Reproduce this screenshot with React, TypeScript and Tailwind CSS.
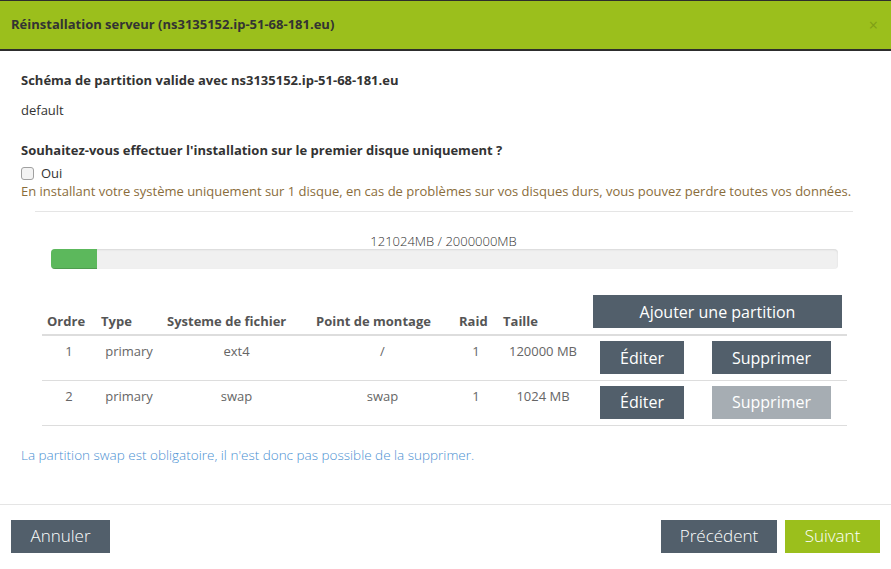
const rows = [
  { ordre: 1, type: "primary", fs: "ext4", mount: "/", raid: 1, size: "120000 MB", canDelete: true },
  { ordre: 2, type: "primary", fs: "swap", mount: "swap", raid: 1, size: "1024 MB", canDelete: false },
];

export default function App() {
  return (
    <div className="w-[891px] h-[569px] bg-white font-['Open_Sans',sans-serif] text-[13px] text-[#333] overflow-hidden">
      {/* header */}
      <div className="h-[51px] border-t border-[#2d2d2d] border-b-2 border-b-[#2d2d2d] bg-[#9bbf1c] flex items-center justify-between pl-[11px] pr-[13px]">
        <h3 className="font-bold text-[13px] text-[#333]">
          Réinstallation serveur (ns3135152.ip-51-68-181.eu)
        </h3>
        <span className="text-[16px] text-[#7f9e16] leading-none">×</span>
      </div>

      {/* body */}
      <div className="px-[21px] pt-[19px]">
        <h4 className="font-bold leading-[20px]">Schéma de partition valide avec ns3135152.ip-51-68-181.eu</h4>
        <p className="mt-[10px] leading-[20px]">default</p>
        <h4 className="mt-[20px] font-bold leading-[20px]">
          Souhaitez-vous effectuer l'installation sur le premier disque uniquement ?
        </h4>
        <label className="mt-[4px] flex items-center gap-[7px] leading-[18px]">
          <span className="w-[13px] h-[13px] rounded-[3px] border border-[#a0a0a0] bg-[#f3f3f3]"></span>
          Oui
        </label>
        <p className="leading-[18px] text-[#8a6d3b]">
          En installant votre système uniquement sur 1 disque, en cas de problèmes sur vos disques durs, vous pouvez perdre toutes vos données.
        </p>
        <div className="mt-[11px] ml-[14px] mr-[17px] border-t border-[#e5e5e5]"></div>

        <p className="mt-[20px] text-center leading-[18px] text-[#333] font-light pr-[4px]">121024MB / 2000000MB</p>
        <div className="mt-[-1px] ml-[30px] w-[787px] h-[20px] rounded-[4px] bg-[#f0f0f0] shadow-[inset_0_1px_2px_rgba(0,0,0,0.1)] overflow-hidden">
          <div className="h-full w-[46px] bg-[#5cb85c] shadow-[inset_0_-1px_0_rgba(0,0,0,0.15)]"></div>
        </div>

        <table className="mt-[26px] ml-[21px] w-[805px] border-collapse table-fixed">
          <colgroup>
            <col className="w-[54px]" />
            <col className="w-[66px]" />
            <col className="w-[149px]" />
            <col className="w-[143px]" />
            <col className="w-[44px]" />
            <col className="w-[90px]" />
            <col className="w-[108px]" />
            <col className="w-[151px]" />
          </colgroup>
          <thead>
            <tr className="border-b-2 border-[#dddddd] text-left text-[#555] font-bold">
              <th className="px-[5px] pb-[3px] align-bottom">Ordre</th>
              <th className="px-[5px] pb-[3px] align-bottom">Type</th>
              <th className="px-[5px] pb-[3px] align-bottom">Systeme de fichier</th>
              <th className="px-[5px] pb-[3px] align-bottom">Point de montage</th>
              <th className="px-[5px] pb-[3px] align-bottom">Raid</th>
              <th className="px-[5px] pb-[3px] align-bottom">Taille</th>
              <th colSpan={2} className="pl-[5px] pr-[5px] pb-[6px] align-top">
                <button className="block w-[249px] h-[33px] bg-[#525f6b] text-white text-[16px] font-normal">
                  Ajouter une partition
                </button>
              </th>
            </tr>
          </thead>
          <tbody>
            {rows.map((r) => (
              <tr key={r.ordre} className="border-b border-[#dddddd] text-[#666] text-center">
                <td className="align-top pt-[6px] h-[45px]">{r.ordre}</td>
                <td className="align-top pt-[6px]">{r.type}</td>
                <td className="align-top pt-[6px]">{r.fs}</td>
                <td className="align-top pt-[6px]">{r.mount}</td>
                <td className="align-top pt-[6px]">{r.raid}</td>
                <td className="align-top pt-[6px]">{r.size}</td>
                <td className="align-top pt-[5px]">
                  <button className="w-[84px] h-[33px] bg-[#525f6b] text-white text-[16px]">Éditer</button>
                </td>
                <td className="align-top pt-[5px]">
                  <button
                    className={
                      r.canDelete
                        ? "w-[119px] h-[33px] bg-[#525f6b] text-white text-[16px]"
                        : "w-[119px] h-[33px] bg-[#a6adb3] text-white text-[16px]"
                    }
                  >
                    Supprimer
                  </button>
                </td>
              </tr>
            ))}
          </tbody>
        </table>

        <p className="mt-[20px] leading-[18px] text-[13.5px] text-[#4a90d2] font-light">
          La partition swap est obligatoire, il n'est donc pas possible de la supprimer.
        </p>
      </div>

      {/* footer */}
      <div className="mt-[40px] border-t border-[#e5e5e5] px-[11px] pt-[15px] flex justify-between">
        <button className="w-[99px] h-[33px] bg-[#525f6b] text-white text-[17px] font-light">Annuler</button>
        <div className="flex gap-[8px]">
          <button className="w-[116px] h-[33px] bg-[#525f6b] text-white text-[17px] font-light">Précédent</button>
          <button className="w-[95px] h-[33px] bg-[#9bbf1c] text-white text-[17px] font-light">Suivant</button>
        </div>
      </div>
    </div>
  );
}
